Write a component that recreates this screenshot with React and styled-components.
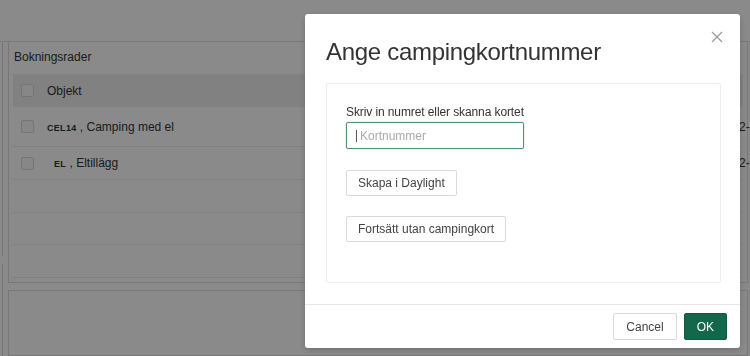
import styled, { createGlobalStyle } from "styled-components";

const Global = createGlobalStyle`
    html, body {
        margin: 0;
        padding: 0;
        background: #fff;
        font-family: "Liberation Sans", Arial, sans-serif;
        color: #333;
    }
    * { box-sizing: border-box; }
`;

const Page = styled.div`
    width: 750px;
    height: 356px;
    overflow: hidden;
    display: flex;
    flex-direction: column;
`;

const TopBar = styled.div`
    height: 42px;
    flex: none;
    border-bottom: 1px solid #e0e0e0;
`;

const Body = styled.div`
    display: flex;
    flex: 1;
    min-height: 0;
`;

const RailCol = styled.div`
    width: 3px;
    display: flex;
    flex-direction: column;
    gap: 8px;
    flex: none;
`;

const Rail = styled.div`
    border-right: 1px solid #dadada;
    height: ${(p) => (p.$h ? `${p.$h}px` : "auto")};
    flex: ${(p) => (p.$h ? "none" : "1")};
`;

const Main = styled.div`
    margin-left: 5px;
    width: 740px;
    display: flex;
    flex-direction: column;
    gap: 7px;
`;

const Panel = styled.div`
    border: 1px solid #dcdcdc;
    border-top: ${(p) => (p.$noTop ? "none" : "1px solid #dcdcdc")};
    padding: ${(p) => p.$pad || "0"};
    flex: ${(p) => (p.$grow ? "1" : "none")};
`;

const PanelTitle = styled.div`
    font-size: 12px;
    line-height: 14px;
    padding-left: 1px;
    margin-bottom: 10px;
`;

const Row = styled.div`
    display: grid;
    grid-template-columns: 34px 672px auto;
    align-items: center;
    height: ${(p) => p.$h}px;
    font-size: 12px;
    background: ${(p) => (p.$head ? "#efefef" : "transparent")};
    border-bottom: ${(p) => (p.$head ? "none" : "1px solid #ececec")};
    white-space: nowrap;
`;

const Check = styled.span`
    width: 13px;
    height: 13px;
    margin-left: 8px;
    border: 1px solid #d8d8d8;
    border-radius: 2px;
    background: #fafafa;
`;

const ObjText = styled.span`
    padding-left: ${(p) => p.$indent || 0}px;
`;

const Code = styled.span`
    font-size: 9px;
    font-weight: bold;
    letter-spacing: 0.3px;
`;

const Overlay = styled.div`
    position: fixed;
    inset: 0;
    background: rgba(0, 0, 0, 0.46);
`;

const Modal = styled.div`
    position: fixed;
    left: 305px;
    top: 14px;
    width: 435px;
    height: 334px;
    background: #fff;
    border-radius: 3px;
    box-shadow: 0 2px 6px rgba(0, 0, 0, 0.2);
    display: flex;
    flex-direction: column;
`;

const Title = styled.h1`
    margin: 24px 0 0 21px;
    font-size: 24px;
    line-height: 28px;
    letter-spacing: -0.3px;
    font-weight: normal;
    color: #333;
`;

const Close = styled.button`
    position: absolute;
    top: 17px;
    right: 17px;
    width: 12px;
    height: 12px;
    padding: 0;
    border: none;
    background: none;
    display: flex;
`;

const Card = styled.div`
    margin: 17px 19px 0 21px;
    height: 200px;
    border: 1px solid #ededed;
    border-radius: 2px;
    padding: 21px 20px 0 19px;
    display: flex;
    flex-direction: column;
    align-items: flex-start;
`;

const Label = styled.label`
    font-size: 12px;
    line-height: 14px;
    letter-spacing: -0.1px;
    color: #333;
    margin-bottom: 3px;
`;

const InputWrap = styled.div`
    position: relative;

    &::before {
        content: "";
        position: absolute;
        left: 10px;
        top: 8px;
        width: 1px;
        height: 12px;
        background: #555;
    }
`;

const Input = styled.input`
    width: 178px;
    height: 27px;
    border: 1px solid #4f9272;
    border-radius: 2px;
    box-shadow: 0 0 2px rgba(40, 120, 80, 0.35);
    padding: 0 0 0 13px;
    font-family: inherit;
    font-size: 12px;
    outline: none;

    &::placeholder {
        color: #aaa;
    }
`;

const Button = styled.button`
    height: ${(p) => (p.$footer ? 27 : 26)}px;
    padding: 0 ${(p) => (p.$footer ? 12 : 11)}px;
    margin-top: ${(p) => p.$mt || 0}px;
    font-family: inherit;
    font-size: 12px;
    color: ${(p) => (p.$primary ? "#fff" : "#444")};
    background: ${(p) => (p.$primary ? "#13674a" : "#fff")};
    border: 1px solid ${(p) => (p.$primary ? "#0f5a40" : "#dadada")};
    border-radius: 2px;
`;

const Footer = styled.div`
    margin-top: 21px;
    border-top: 1px solid #e8e8e8;
    padding: 8px 13px 0 0;
    display: flex;
    justify-content: flex-end;
    gap: 7px;
`;

const rows = [
    { h: 40, code: "CEL14", name: "Camping med el", date: "2022-06-10" },
    { h: 33, code: "EL", name: "Eltillägg", date: "2022-06-10", indent: 7 },
    { h: 33 },
    { h: 32 },
    { h: 33 },
];

export default function App() {
    return (
        <>
            <Global />
            <Page>
                <TopBar />
                <Body>
                    <RailCol>
                        <Rail $h={214} />
                        <Rail />
                    </RailCol>
                    <Main>
                        <Panel $noTop $pad="8px 4px 4px 4px">
                            <PanelTitle>Bokningsrader</PanelTitle>
                            <Row $head $h={33}>
                                <Check />
                                <span>Objekt</span>
                                <span />
                            </Row>
                            {rows.map((r, i) => (
                                <Row key={i} $h={r.h}>
                                    {r.code ? <Check /> : <span />}
                                    {r.code ? (
                                        <ObjText $indent={r.indent}>
                                            <Code>{r.code}</Code> , {r.name}
                                        </ObjText>
                                    ) : (
                                        <span />
                                    )}
                                    <span>{r.date}</span>
                                </Row>
                            ))}
                        </Panel>
                        <Panel $grow />
                    </Main>
                </Body>
            </Page>
            <Overlay />
            <Modal>
                <Title>Ange campingkortnummer</Title>
                <Close aria-label="Stäng">
                    <svg width="12" height="12" viewBox="0 0 12 12">
                        <path d="M1 1L11 11M11 1L1 11" stroke="#999" strokeWidth="1.2" fill="none" />
                    </svg>
                </Close>
                <Card>
                    <Label htmlFor="card">Skriv in numret eller skanna kortet</Label>
                    <InputWrap>
                        <Input id="card" placeholder="Kortnummer" />
                    </InputWrap>
                    <Button $mt={21}>Skapa i Daylight</Button>
                    <Button $mt={20}>Fortsätt utan campingkort</Button>
                </Card>
                <Footer>
                    <Button $footer>Cancel</Button>
                    <Button $footer $primary>OK</Button>
                </Footer>
            </Modal>
        </>
    );
}
